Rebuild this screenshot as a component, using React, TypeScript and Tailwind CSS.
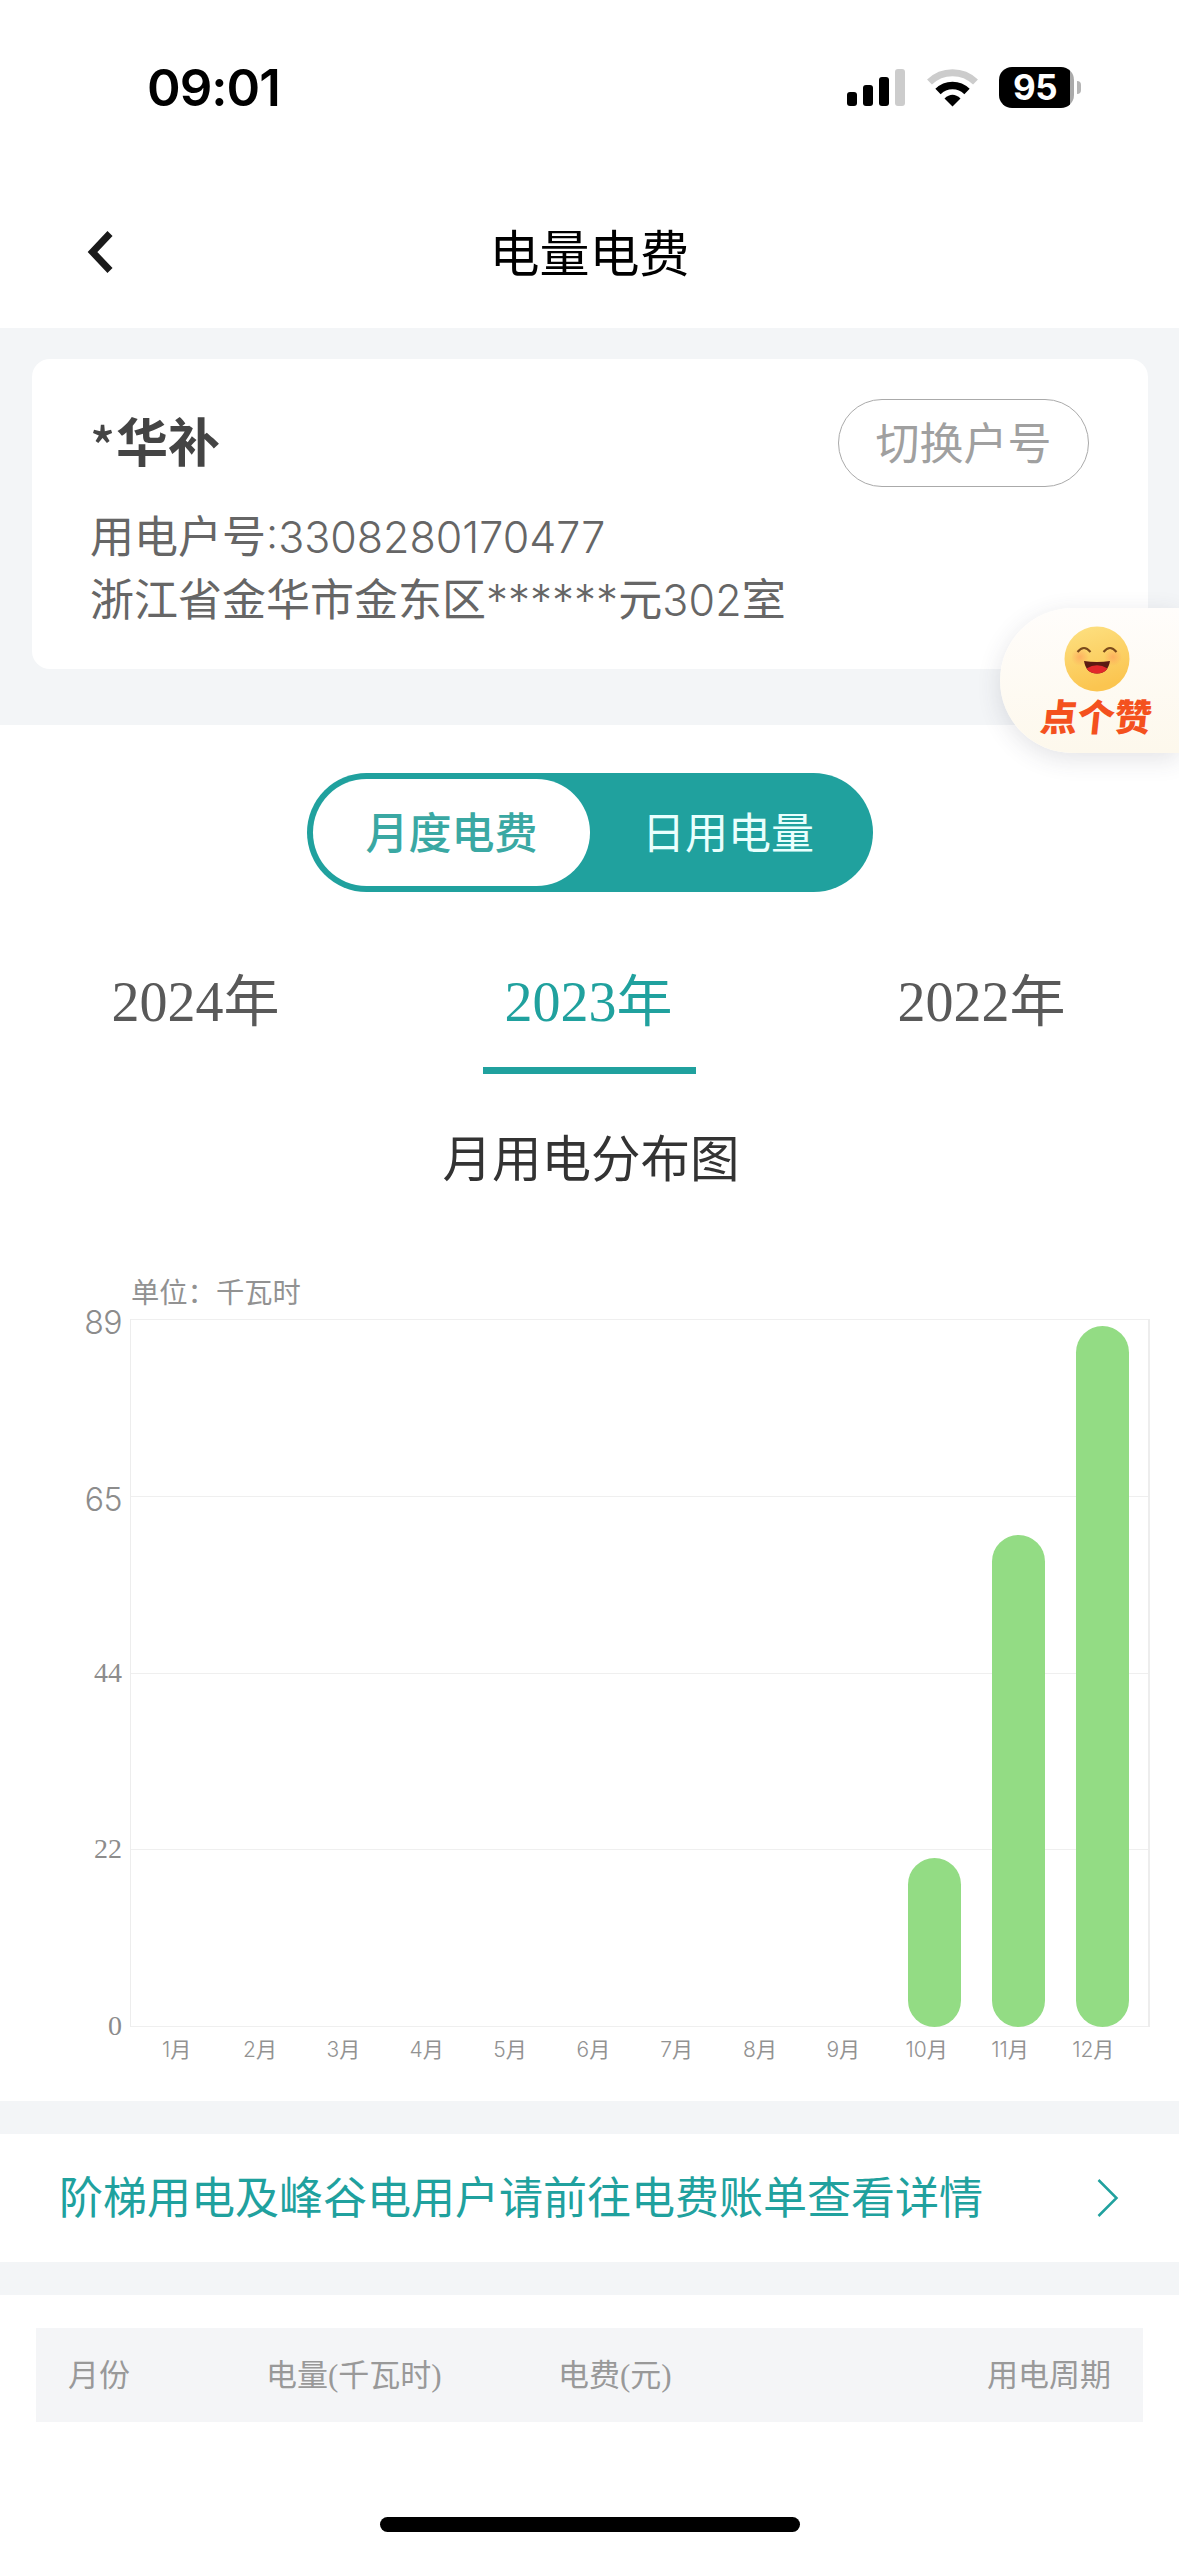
import React from "react";

const YEARS = ["2024年", "2023年", "2022年"];
const ACTIVE_YEAR = "2023年";

const TICKS = [
  { label: "89", className: "font-['Inter'] font-light text-[32px] tracking-[-0.5px] pt-1" },
  { label: "65", className: "font-['Inter'] font-light text-[32px] tracking-[-0.5px] pt-1" },
  { label: "44", className: "font-['Liberation_Serif'] text-[28px]" },
  { label: "22", className: "font-['Liberation_Serif'] text-[28px]" },
  { label: "0", className: "font-['Liberation_Serif'] text-[28px]" },
];

// bar heights in px, the plot is 707px high
const MONTHS = [
  { label: "1", height: 0 },
  { label: "2", height: 0 },
  { label: "3", height: 0 },
  { label: "4", height: 0 },
  { label: "5", height: 0 },
  { label: "6", height: 0 },
  { label: "7", height: 0 },
  { label: "8", height: 0 },
  { label: "9", height: 0 },
  { label: "10", height: 169 },
  { label: "11", height: 492 },
  { label: "12", height: 701 },
];

function StatusBar() {
  return (
    <div className="flex h-[176px] items-start justify-between pl-[147px] pr-[98px] pt-[60px]">
      <p className="font-['Inter'] text-[51px] font-semibold leading-[56px] tracking-[-1px] text-black">
        09:01
      </p>
      <div className="flex items-start pt-[7px]">
        <svg className="mt-[2px]" width="58" height="38" viewBox="0 0 58 38">
          <rect x="0" y="23" width="10" height="14" rx="3" fill="#000" />
          <rect x="16" y="16" width="10" height="21" rx="3" fill="#000" />
          <rect x="32" y="8" width="10" height="29" rx="3" fill="#000" />
          <rect x="48" y="0" width="10" height="37" rx="3" fill="#ccc" />
        </svg>
        <svg className="ml-[22px] mt-[2px]" width="51" height="38" viewBox="0 0 51 38">
          <path d="M2.500 13 A33 33 0 0 1 48.500 13" fill="none" stroke="#ccc" strokeWidth="7" />
          <path d="M11 22.500 A20.500 20.500 0 0 1 40 22.500" fill="none" stroke="#000" strokeWidth="7.500" />
          <path d="M25.500 37.500 L17.500 29.500 Q25.500 22 33.500 29.500 Z" fill="#000" />
        </svg>
        <div className="ml-[21px] flex items-center">
          <div className="flex h-[41px] w-[75px] items-center justify-center rounded-[13px] bg-linear-to-r from-black from-95% to-[#aaa] to-95%">
            <span className="pr-[3px] font-['Inter'] text-[35px] font-bold leading-[41px] tracking-[-0.5px] text-white">
              95
            </span>
          </div>
          <div className="ml-[3px] h-[13px] w-[4px] rounded-r-full bg-[#b5b5b5]" />
        </div>
      </div>
    </div>
  );
}

function NavBar() {
  return (
    <div className="grid h-[152px] grid-cols-3 items-center">
      <svg className="ml-[86px]" width="30" height="44" viewBox="0 0 30 44">
        <path d="M24 3.500 L6.500 22 L24 40.500" fill="none" stroke="#1a1a1a" strokeWidth="7" />
      </svg>
      <h1 className="pt-[5px] text-center text-[50px] leading-[60px] text-black">电量电费</h1>
    </div>
  );
}

function AccountCard() {
  return (
    <div className="h-[397px] bg-[#f3f5f7] px-8 pt-[31px]">
      <div className="h-[310px] w-[1116px] rounded-[18px] bg-white pl-[58px] pr-[59px] pt-10">
        <div className="flex h-[88px] items-center justify-between">
          <p className="flex pt-[2px] text-[52px] font-bold leading-[60px] text-[#444]">
            <span className="w-[26px] font-['Noto_Sans_CJK_SC'] font-medium">*</span>华补
          </p>
          <button className="h-[88px] w-[251px] rounded-full border border-[#aaa] pt-[4px] text-[44px] leading-[60px] text-[#a0a0a0]">
            切换户号
          </button>
        </div>
        <div className="pt-[19px] text-[44px] leading-[62px] text-[#666]">
          <p>
            用电户号
            <span className="font-['Inter'] text-[43px] font-light">:3308280170477</span>
          </p>
          <p>
            浙江省金华市金东区
            <span className="font-['Inter'] font-light">******</span>元
            <span className="font-['Inter'] text-[43px] font-light tracking-[0.2px]">302</span>室
          </p>
        </div>
      </div>
    </div>
  );
}

function LikeBadge() {
  return (
    <div className="absolute right-0 top-[608px] flex h-[145px] w-[179px] flex-col items-center rounded-l-full bg-linear-to-b from-[#fffdfb] to-[#fdf8ec] pl-[14px] pt-[18px] shadow-[0_6px_24px_rgba(60,60,80,0.14)]">
      <svg width="66" height="66" viewBox="0 0 66 66">
        <defs>
          <linearGradient id="face" x1="0" y1="0" x2="0.300" y2="1">
            <stop offset="0" stopColor="#fde182" />
            <stop offset="1" stopColor="#fbc550" />
          </linearGradient>
          <radialGradient id="cheek">
            <stop offset="0" stopColor="#ff9a5c" stopOpacity="0.600" />
            <stop offset="1" stopColor="#ff9a5c" stopOpacity="0" />
          </radialGradient>
        </defs>
        <circle cx="33" cy="33" r="32.500" fill="url(#face)" />
        <circle cx="16" cy="31" r="9" fill="url(#cheek)" />
        <circle cx="49" cy="31" r="9" fill="url(#cheek)" />
        <path d="M13.500 26 Q20 18 26.500 26" fill="none" stroke="#7a4a1c" strokeWidth="2" />
        <path d="M39.500 26 Q46 18 52.500 26" fill="none" stroke="#7a4a1c" strokeWidth="2" />
        <path d="M20 35 Q33 37 46 35 Q44 47.500 33 47.500 Q22 47.500 20 35 Z" fill="#5c1a12" />
        <path d="M22.500 42.500 Q33 36 43.500 42.500 Q40 47.500 33 47.500 Q26 47.500 22.500 42.500 Z" fill="#e2282b" />
      </svg>
      <p className="-skew-x-6 pt-[7px] text-[37px] font-black leading-[40px] text-[#f4511e]">
        点个赞
      </p>
    </div>
  );
}

function ModeSwitch() {
  return (
    <div className="mx-auto mt-12 flex h-[119px] w-[566px] rounded-full bg-[#20a19e] p-[6px] text-[43px] leading-[107px]">
      <button className="w-[277px] rounded-full bg-white pl-px pt-[3px] font-medium leading-[104px] text-[#3aa8a3]">
        月度电费
      </button>
      <button className="grow pt-[3px] leading-[104px] text-[#e9fffd]">日用电量</button>
    </div>
  );
}

function YearTabs() {
  return (
    <div className="mt-[70px] grid h-[112px] grid-cols-3 font-['Liberation_Serif','Noto_Sans_CJK_SC',serif] text-[56px] leading-[80px]">
      {YEARS.map((year) => (
        <div
          key={year}
          className={
            year === ACTIVE_YEAR
              ? "flex flex-col items-center justify-between text-[#20a19e]"
              : "flex flex-col items-center text-[#595959]"
          }
        >
          <span className="pr-[2px]">{year}</span>
          {year === ACTIVE_YEAR && <div className="h-[7px] w-[213px] bg-[#20a19e]" />}
        </div>
      ))}
    </div>
  );
}

function UsageChart() {
  return (
    <div className="h-[1027px]">
      <h2 className="pl-[3px] pt-[56px] text-center text-[49.5px] leading-[60px] text-[#333]">月用电分布图</h2>
      <p className="pl-[131px] pt-[82px] text-[28.3px] leading-[42px] text-[#929292]">单位：千瓦时</p>
      <div className="mt-[5px] flex">
        <div className="-mt-5 flex h-[747px] w-[122px] flex-col justify-between text-right text-[#8c8c8c]">
          {TICKS.map((tick) => (
            <span key={tick.label} className={`${tick.className} h-10 leading-[40px]`}>
              {tick.label}
            </span>
          ))}
        </div>
        <div className="relative ml-2 h-[708px] w-[1020px] border-l border-r-2 border-[#ededed]">
          <div className="flex h-[708px] flex-col justify-between">
            {TICKS.map((tick) => (
              <div key={tick.label} className="h-px bg-[#efefef]" />
            ))}
          </div>
          {/* bars lie over the grid lines */}
          <div className="absolute bottom-0 left-[5px] flex w-[1009px] items-end">
            {MONTHS.map((month) => (
              <div key={month.label} className="flex flex-1 justify-center">
                <div
                  className="w-[53px] rounded-full bg-[#93dc84]"
                  style={{ height: month.height }}
                />
              </div>
            ))}
          </div>
        </div>
      </div>
      <div className="-mt-[11px] ml-[135px] flex w-[1000px] text-[21px] leading-[30px] text-[#929292]">
        {MONTHS.map((month) => (
          <span key={month.label} className="flex-1 text-center">
            <span className="font-['Inter'] font-light">{month.label}</span>月
          </span>
        ))}
      </div>
    </div>
  );
}

function BillLink() {
  return (
    <div className="border-y-[33px] border-[#f3f5f7]">
      <div className="flex h-[128px] items-center justify-between pl-[59px] pr-[60px] text-[#20a19e]">
        <p className="pt-[2px] text-[44px] leading-[60px]">
          阶梯用电及峰谷电用户请前往电费账单查看详情
        </p>
        <svg width="22" height="38" viewBox="0 0 22 38">
          <path d="M1.500 1 L19.500 19 L1.500 37" fill="none" stroke="currentColor" strokeWidth="2.500" />
        </svg>
      </div>
    </div>
  );
}

function BillTable() {
  return (
    <div className="mx-9 mt-[33px] grid h-[94px] grid-cols-[198px_292px_1fr_auto] items-center bg-[#f4f5f7] pl-[32px] pr-[32px] pt-[2px] font-['Liberation_Serif','Noto_Sans_CJK_SC',serif] text-[31px] text-[#999]">
      <span>月份</span>
      <span>电量(千瓦时)</span>
      <span>电费(元)</span>
      <span>用电周期</span>
    </div>
  );
}

export default function App() {
  return (
    <div className="relative flex h-[2556px] w-[1179px] flex-col overflow-hidden bg-white font-['Liberation_Sans','Noto_Sans_CJK_SC',sans-serif]">
      <StatusBar />
      <NavBar />
      <AccountCard />
      <ModeSwitch />
      <YearTabs />
      <UsageChart />
      <BillLink />
      <BillTable />
      <div className="mx-auto mt-auto mb-6 h-[15px] w-[420px] rounded-full bg-black" />
      <LikeBadge />
    </div>
  );
}
